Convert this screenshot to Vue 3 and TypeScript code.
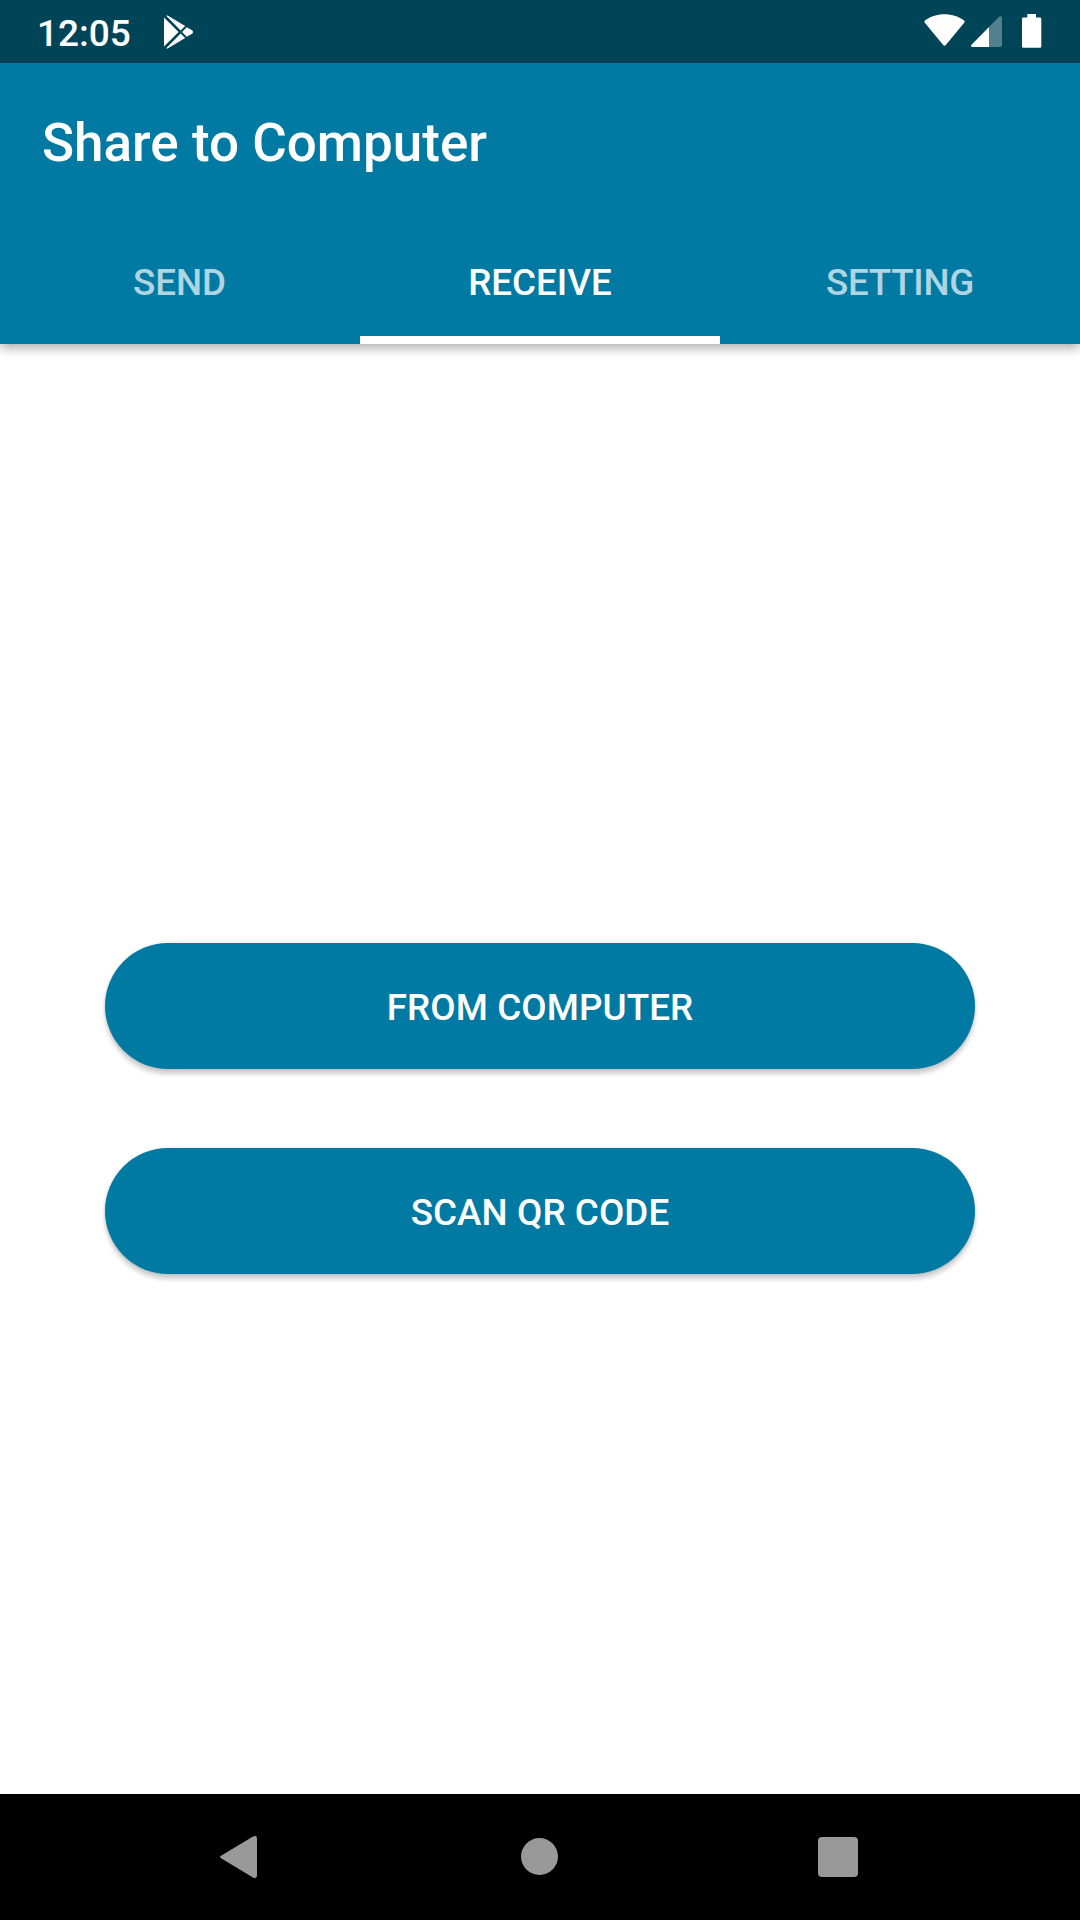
<script setup lang="ts">
import { ref } from 'vue'

const tabs: string[] = ['SEND', 'RECEIVE', 'SETTING']
const active = ref<string>('RECEIVE')
const actions: string[] = ['FROM COMPUTER', 'SCAN QR CODE']
</script>

<template>
  <div class="screen">
    <div class="status-bar">
      <span class="clock">12:05</span>
      <svg class="play" width="30" height="34" viewBox="0 0 30 34">
        <g fill="#fff">
          <path d="M0 2.6 14.6 17 0 31.4Z" />
          <path d="M2.2.8Q3 .3 4 .8L21.2 11.1 16.6 15.5Z" />
          <path d="M2.2 33.2Q3 33.7 4 33.2L21.2 22.9 16.6 18.5Z" />
          <path d="M22.8 12.2 28.4 15.6Q30 17 28.4 18.4L22.8 21.8 18 17Z" />
        </g>
      </svg>
      <span class="spacer"></span>
      <svg class="wifi" width="41" height="33" viewBox="0 0 41 33">
        <path fill="#fff" d="M.8 6.6C6 2.6 12.8.2 20.5.2S35 2.6 40.2 6.6Q41 7.6 40.2 8.8L21.8 31Q20.5 32.4 19.2 31L.8 8.8Q0 7.6.8 6.6Z" />
      </svg>
      <svg class="signal" width="31" height="31" viewBox="0 0 31 31">
        <path fill="#fff" fill-opacity=".32" d="M18 11 28.4.6Q31-.8 31 2V29Q31 31 29 31H18Z" />
        <path fill="#fff" d="M18 11V31H1.4Q-.8 30.8.5 28.7Z" />
      </svg>
      <svg class="battery" width="20" height="34" viewBox="0 0 20 34">
        <path fill="#fff" d="M5.3 0H14V3.5H18Q19.3 3.5 19.3 4.8V32.5Q19.3 33.8 18 33.8H1.3Q0 33.8 0 32.5V4.8Q0 3.5 1.3 3.5H5.3Z" />
      </svg>
    </div>

    <header class="app-bar">
      <h1 class="title">Share to Computer</h1>
      <nav class="tabs">
        <button
          v-for="tab in tabs"
          :key="tab"
          class="tab"
          :class="{ active: tab === active }"
          @click="active = tab"
        >{{ tab }}</button>
      </nav>
    </header>

    <main class="content">
      <button v-for="action in actions" :key="action" class="action">{{ action }}</button>
    </main>

    <div class="nav-bar">
      <svg class="nav-icon" width="44" height="44" viewBox="0 0 44 44">
        <path fill="#999" d="M4 20.8 36 1.6Q40 0 40 3.5V40.5Q40 44 36 42.4L4 23.2Q2 22 4 20.8Z" />
      </svg>
      <svg class="nav-icon" width="44" height="44" viewBox="0 0 44 44">
        <circle cx="22.5" cy="21.5" r="18.5" fill="#999" />
      </svg>
      <svg class="nav-icon" width="44" height="44" viewBox="0 0 44 44">
        <rect x="2" y="2" width="40" height="40" rx="4" fill="#999" />
      </svg>
    </div>
  </div>
</template>

<style>
body {
  margin: 0;
}
</style>

<style scoped>
.screen {
  width: 1080px;
  height: 1920px;
  display: flex;
  flex-direction: column;
  overflow: hidden;
  background: #fff;
  color: #fff;
  font-family: Roboto, 'Noto Sans', sans-serif;
  font-weight: 500;
}

.status-bar {
  flex: none;
  height: 63px;
  display: flex;
  align-items: flex-start;
  background: #004557;
}

.status-bar svg {
  display: block;
}

.clock {
  width: 127px;
  margin-left: 37px;
  padding-top: 12px;
  font-size: 37px;
  line-height: 44px;
}

.play {
  margin-top: 15px;
}

.spacer {
  flex: 1;
}

.wifi {
  margin: 14px 6px 0 0;
}

.signal {
  margin: 16px 20px 0 0;
}

.battery {
  margin: 14px 38px 0 0;
}

.app-bar {
  flex: none;
  height: 281px;
  display: flex;
  flex-direction: column;
  position: relative;
  background: #007aa3;
  box-shadow: 0 4px 10px rgba(0, 0, 0, 0.32);
}

.title {
  margin: 0;
  padding: 5px 42px 0;
  flex: 1;
  display: flex;
  align-items: center;
  font-size: 53px;
  font-weight: 500;
  line-height: 62px;
}

.tabs {
  height: 126px;
  display: grid;
  grid-template-columns: repeat(3, 360px);
}

.tab {
  box-sizing: border-box;
  margin: 0;
  padding: 12px 0 0;
  border: 0;
  border-bottom: 8px solid transparent;
  background: none;
  color: rgba(255, 255, 255, 0.7);
  font: 500 36.75px/44px Roboto, 'Noto Sans', sans-serif;
  letter-spacing: -0.25px;
}

.tab:first-child {
  padding-right: 1px;
  letter-spacing: 0;
}

.tab.active {
  color: #fff;
  border-bottom-color: #fff;
  letter-spacing: 0;
}

.content {
  flex: 1;
  display: flex;
  flex-direction: column;
  justify-content: center;
  gap: 79px;
  padding: 79px 105px 0;
}

.action {
  height: 126px;
  padding: 4px 0 0;
  border: 0;
  border-radius: 63px;
  background: #007aa3;
  color: #fff;
  font: 500 36.75px/44px Roboto, 'Noto Sans', sans-serif;
  letter-spacing: 0.1px;
  box-shadow: 0 5px 5px rgba(0, 0, 0, 0.2), 0 0 3px rgba(0, 0, 0, 0.12);
}

.nav-bar {
  flex: none;
  height: 126px;
  display: flex;
  align-items: center;
  justify-content: space-between;
  padding: 0 220px 0 217px;
  background: #000;
}
</style>
